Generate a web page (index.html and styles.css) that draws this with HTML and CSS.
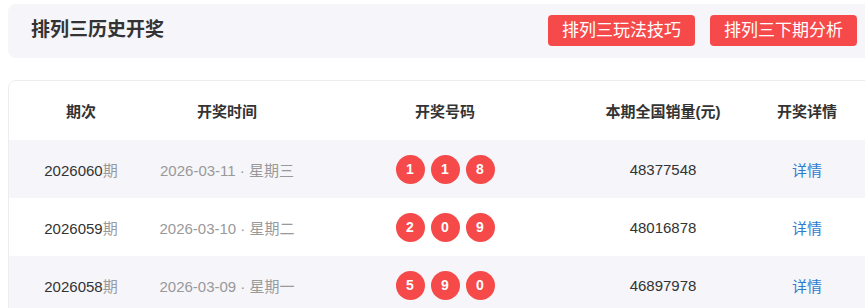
FILE: index.html
```html
<!DOCTYPE html>
<html lang="zh">
<head>
<meta charset="utf-8">
<link rel="stylesheet" href="styles.css">
</head>
<body>
<div class="page">
  <div class="topbar">
    <h1 class="title">排列三历史开奖</h1>
    <div class="actions">
      <a class="btn">排列三玩法技巧</a>
      <a class="btn">排列三下期分析</a>
    </div>
  </div>
  <div class="card">
    <div class="row head">
      <div>期次</div>
      <div>开奖时间</div>
      <div>开奖号码</div>
      <div>本期全国销量(元)</div>
      <div>开奖详情</div>
    </div>
    <div class="row odd">
      <div>2026060<span class="muted">期</span></div>
      <div class="muted">2026-03-11 · 星期三</div>
      <div class="balls"><span class="ball">1</span><span class="ball">1</span><span class="ball">8</span></div>
      <div>48377548</div>
      <div><a class="link">详情</a></div>
    </div>
    <div class="row">
      <div>2026059<span class="muted">期</span></div>
      <div class="muted">2026-03-10 · 星期二</div>
      <div class="balls"><span class="ball">2</span><span class="ball">0</span><span class="ball">9</span></div>
      <div>48016878</div>
      <div><a class="link">详情</a></div>
    </div>
    <div class="row odd">
      <div>2026058<span class="muted">期</span></div>
      <div class="muted">2026-03-09 · 星期一</div>
      <div class="balls"><span class="ball">5</span><span class="ball">9</span><span class="ball">0</span></div>
      <div>46897978</div>
      <div><a class="link">详情</a></div>
    </div>
  </div>
</div>
</body>
</html>
```

FILE: styles.css
```css
html, body {
  margin: 0;
  padding: 0;
  overflow: hidden;
  background: #fff;
}
body {
  font-family: "Liberation Sans", "Noto Sans CJK SC", sans-serif;
  color: #333;
}
.page {
  width: 880px;
  padding: 4px 0 0 8px;
}
.topbar {
  height: 54px;
  box-sizing: border-box;
  background: #f5f5fa;
  border-radius: 8px;
  display: flex;
  align-items: center;
  justify-content: space-between;
  padding: 0 31px 0 23px;
}
.title {
  margin: -2px 0 0 0;
  font-size: 19px;
  line-height: 24px;
  font-weight: bold;
  color: #333;
}
.actions {
  display: flex;
  gap: 15px;
  margin-top: -1px;
}
.btn {
  display: block;
  height: 31px;
  line-height: 31px;
  padding: 0 14px;
  background: #f64a4a;
  color: #fff;
  font-size: 17px;
  border-radius: 4px;
  white-space: nowrap;
}
.card {
  margin-top: 22px;
  border: 1px solid #ececf0;
  border-radius: 8px 0 0 0;
  overflow: hidden;
}
.row {
  display: grid;
  grid-template-columns: 144px 148px 288px 148px 140px;
  height: 58px;
  align-items: center;
  text-align: center;
  font-size: 15px;
}
.row.head {
  height: 59px;
  font-weight: bold;
  background: #fff;
}
.row.odd {
  background: #f5f5fa;
}
.muted {
  color: #999;
}
.balls {
  display: flex;
  justify-content: center;
  gap: 6px;
}
.ball {
  width: 29px;
  height: 29px;
  border-radius: 50%;
  background: #f64a4a;
  color: #fff;
  font-weight: bold;
  font-size: 14px;
  line-height: 29px;
  text-align: center;
}
.link {
  color: #2d7cd0;
  text-decoration: none;
}
```
